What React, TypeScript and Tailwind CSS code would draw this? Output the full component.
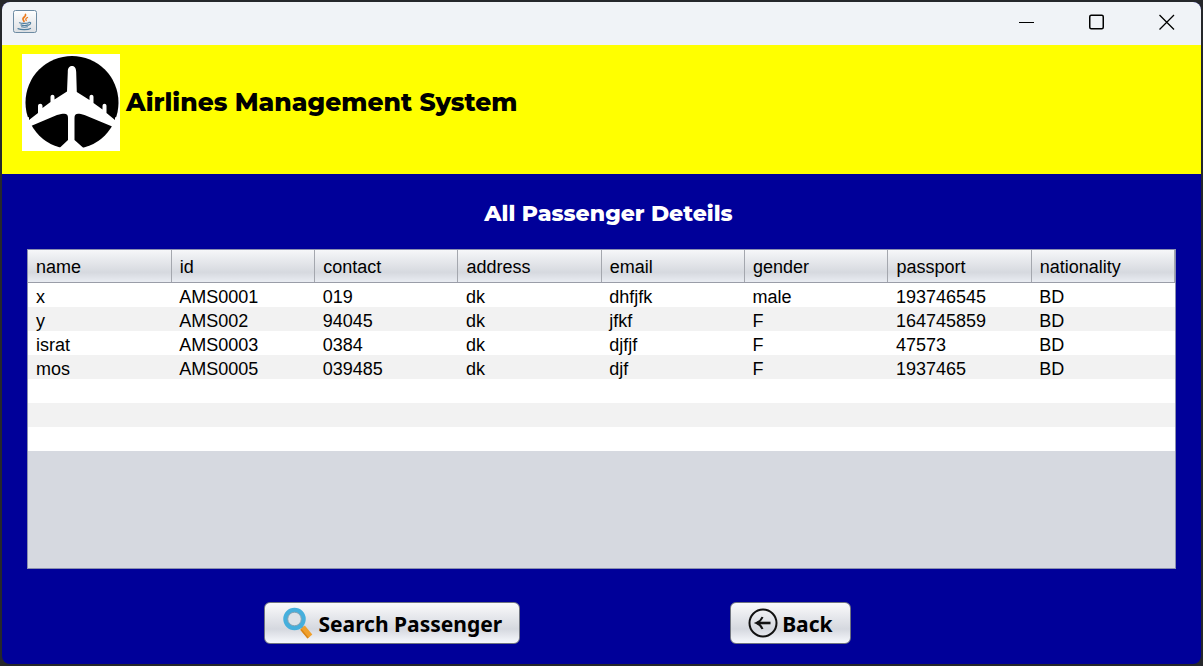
import React from "react";

const columns = ["name", "id", "contact", "address", "email", "gender", "passport", "nationality"];

const passengers = [
  ["x", "AMS0001", "019", "dk", "dhfjfk", "male", "193746545", "BD"],
  ["y", "AMS002", "94045", "dk", "jfkf", "F", "164745859", "BD"],
  ["israt", "AMS0003", "0384", "dk", "djfjf", "F", "47573", "BD"],
  ["mos", "AMS0005", "039485", "dk", "djf", "F", "1937465", "BD"],
];

const emptyRows = 3;

function JavaIcon() {
  return (
    <svg width="24" height="24" viewBox="0 0 24 24" aria-hidden="true">
      <defs>
        <linearGradient id="java-bg" x1="0" y1="0" x2="0" y2="1">
          <stop offset="0" stopColor="#ffffff" />
          <stop offset="1" stopColor="#dcdfe3" />
        </linearGradient>
      </defs>
      <rect x="0.5" y="0.5" width="23" height="22" rx="2" fill="url(#java-bg)" stroke="#6d8ba3" />
      <g fill="none" strokeLinecap="round">
        <path d="M12.500 4.500c1 2-3.500 3-2.500 5 .3.700 1 1 1 2" stroke="#ec7a1c" strokeWidth="1.700" />
        <path d="M14.500 7.500c-2 1-2 1.800-1.300 3" stroke="#ec7a1c" strokeWidth="1.300" />
        <path d="M6.500 12.800c2 .8 7 .8 9.500-.1M8 14.900c2 .7 5 .7 7 0M8.500 16.800c2 .6 4 .6 6 0M5 18.600c3 1.300 10 1.300 12.500-.2" stroke="#4f7e9f" strokeWidth="1.200" />
        <path d="M16 12.300c2.500-.4 2.200 2-.6 2.900" stroke="#4f7e9f" strokeWidth="1.100" />
      </g>
    </svg>
  );
}

function PlaneLogo() {
  return (
    <svg className="shrink-0 bg-white" width="98" height="97" viewBox="0 0 98 97" role="img" aria-label="Airplane">
      <circle cx="50" cy="48.500" r="46.500" fill="#000" />
      <path
        fill="#fff"
        d="M50 12c-3 0-4.200 2.500-4.200 6L45 37.500 32.500 45.500v-2.500c0-3-4-3-4 0v5L20.500 54v-2c0-3-4.500-3-4.500 0v7L7 66v-3L0 66v10l9-4 26-11c8-1.800 11-2 11 3V86l-8.500 8v3h24v-3l-9-8V64c0-5 3-5.200 10-3L89 72l9 4V66l-5-3v3l-8.500-7V52c0-3-4-3-4 0v3.500L71.500 49v-6c0-3-4-3-4 0v3L54.800 38 54.200 18c-.2-3.500-1.200-6-4.200-6Z"
      />
    </svg>
  );
}

function SearchIcon() {
  return (
    <svg width="32" height="32" viewBox="0 0 32 32" aria-hidden="true">
      <path d="m18 18 4 4" stroke="#8d9ba3" strokeWidth="3" />
      <path d="m20.500 20.500 7.500 9" stroke="#f0a02c" strokeWidth="6" />
      <path d="m19 22.500 7 8.500" stroke="#d98518" strokeWidth="1.500" />
      <circle cx="12.500" cy="12" r="9" fill="#dfe3e8" stroke="#46afdc" strokeWidth="4.500" />
      <circle cx="12.500" cy="12" r="6.800" fill="none" stroke="#87a4b4" strokeWidth="1" />
    </svg>
  );
}

function BackIcon() {
  return (
    <svg width="30" height="30" viewBox="0 0 30 30" fill="none" stroke="#111" aria-hidden="true">
      <circle cx="15" cy="15" r="13.500" strokeWidth="2" />
      <path d="M22.500 15H9" strokeWidth="2.600" />
      <path d="M14.500 9c-1 2.500-3.500 5-6 6 2.500 1 5 3.500 6 6" strokeWidth="2" />
    </svg>
  );
}

function ActionButton({ icon, children }: { icon: React.ReactNode; children: React.ReactNode }) {
  return (
    <button
      type="button"
      className="flex h-[42px] items-center gap-1 rounded-md border border-[#6f7480] bg-linear-to-b from-[#fafafb] via-[#d5d8df] via-65% to-[#f7f9fd] px-[17px] font-['Noto_Sans',sans-serif] text-[21px] leading-none font-bold text-black"
    >
      {icon}
      <span className="pt-0.5">{children}</span>
    </button>
  );
}

export default function App() {
  return (
    <div className="flex min-h-screen flex-col bg-[#25272b] p-0.5 font-['Liberation_Sans',Arial,sans-serif] text-black">
      <div className="flex grow flex-col overflow-hidden rounded-lg bg-[#000099]">
        <div className="flex h-[43px] items-center justify-between bg-[#f0f3f7] pr-[26px] pb-1 pl-[11px]">
          <JavaIcon />
          <div className="flex items-center gap-[54px]">
            <button type="button" aria-label="Minimize">
              <svg width="16" height="16" viewBox="0 0 16 16" stroke="#000">
                <path d="M0 8.500h15" />
              </svg>
            </button>
            <button type="button" aria-label="Maximize">
              <svg width="16" height="16" viewBox="0 0 16 16" fill="none" stroke="#000" strokeWidth="1.500">
                <rect x="0.750" y="1.250" width="13.500" height="13.500" rx="1.500" />
              </svg>
            </button>
            <button type="button" aria-label="Close">
              <svg width="16" height="16" viewBox="0 0 16 16" stroke="#000" strokeWidth="1.300">
                <path d="m.5 1 14.500 14.500M15 1 .5 15.500" />
              </svg>
            </button>
          </div>
        </div>

        <header className="flex h-[129px] items-start gap-1.5 bg-[#ffff00] pt-[9px] pl-5">
          <PlaneLogo />
          <h1 className="pt-8 font-['Montserrat','DejaVu_Sans',sans-serif] text-[25px] leading-8 font-extrabold">
            Airlines Management System
          </h1>
        </header>

        <main className="flex grow flex-col px-[25px] pb-5">
          <h2 className="pt-6 pb-[19px] pl-3.5 text-center font-['Montserrat','DejaVu_Sans',sans-serif] text-[22px] leading-8 font-extrabold text-white">
            All Passenger Deteils
          </h2>

          <div className="h-80 border border-[#8a8fb0] bg-[#d6d9e0]">
            <table className="w-full table-fixed border-collapse text-left text-[18px]">
              <thead>
                <tr className="h-8 bg-linear-to-b from-[#f6f7f9] via-[#d6d9df] via-70% to-[#e9ecf2]">
                  {columns.map((column) => (
                    <th
                      key={column}
                      scope="col"
                      className="border-r border-b border-r-[#a4a7ae] border-b-[#9a9da8] p-0 pt-[3px] pl-2 leading-6 font-normal"
                    >
                      {column}
                    </th>
                  ))}
                </tr>
              </thead>
              <tbody>
                {passengers.map((row) => (
                  <tr key={row[1]} className="h-6 odd:bg-white even:bg-[#f2f2f2]">
                    {row.map((value, i) => (
                      <td key={columns[i]} className="p-0 pt-1 pl-2 leading-5">
                        {value}
                      </td>
                    ))}
                  </tr>
                ))}
                {Array.from({ length: emptyRows }, (_, i) => (
                  <tr key={i} className="h-6 odd:bg-white even:bg-[#f2f2f2]">
                    <td colSpan={columns.length} className="p-0" />
                  </tr>
                ))}
              </tbody>
            </table>
          </div>

          <div className="flex justify-center gap-[210px] pt-[33px] pr-[88px]">
            <ActionButton icon={<SearchIcon />}>Search Passenger</ActionButton>
            <ActionButton icon={<BackIcon />}>Back</ActionButton>
          </div>
        </main>
      </div>
    </div>
  );
}
